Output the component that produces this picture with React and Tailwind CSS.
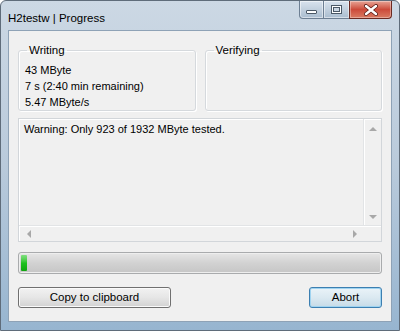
import React from "react";

const font = { fontFamily: '"Liberation Sans", Arial, sans-serif' };

function Arrow({ dir }) {
  const pts = {
    up: "0,5 4,1 8,5",
    down: "0,1 4,5 8,1",
    left: "5,0 1,4 5,8",
    right: "1,0 5,4 1,8",
  }[dir];
  const size = dir === "up" || dir === "down" ? { w: 8, h: 6 } : { w: 6, h: 8 };
  return (
    <svg width={size.w} height={size.h} viewBox={`0 0 ${size.w} ${size.h}`}>
      <polygon points={pts} fill="#a8a8a8" />
    </svg>
  );
}

function GroupBox({ title, children }) {
  return (
    <fieldset className="flex-1 h-[67px] border border-[#d5d9dd] rounded-[3px] shadow-[inset_1px_1px_0_#ffffff,1px_1px_0_#ffffff] px-[6px] m-0 min-w-0">
      <legend className="ml-[2px] px-[2px] text-[11.5px] leading-[12px] text-black">{title}</legend>
      <div className="pt-[6px] text-[11px] leading-[16px] text-black">{children}</div>
    </fieldset>
  );
}

export default function App() {
  return (
    <div
      className="w-[400px] h-[331px] flex flex-col bg-gradient-to-b from-[#ccd8e4] via-[#b9cadb] to-[#97b5d0] border border-[#5f6c7a] rounded-t-[6px] overflow-hidden"
      style={font}
    >
      {/* title bar */}
      <div className="h-[29px] flex items-start justify-between pl-[7px] pr-[7px]">
        <div className="pt-[10px] text-[11.5px] leading-[14px] text-black">H2testw | Progress</div>
        <div className="flex">
          <div className="w-[25px] h-[18px] flex items-end justify-center pb-[4px] border border-[#6d7f93] border-t-0 rounded-bl-[4px] bg-gradient-to-b from-[#d9e3ee] via-[#c2d0de] to-[#a9bccf] shadow-[inset_0_0_0_1px_rgba(255,255,255,0.5)]">
            <div className="w-[11px] h-[4px] border border-[#4a5866] bg-white rounded-[1px]" />
          </div>
          <div className="w-[25px] h-[18px] flex items-center justify-center border-b border-[#6d7f93] bg-gradient-to-b from-[#d9e3ee] via-[#c2d0de] to-[#a9bccf] shadow-[inset_0_0_0_1px_rgba(255,255,255,0.5)]">
            <div className="w-[11px] h-[9px] border border-[#4a5866] bg-white flex items-center justify-center">
              <div className="w-[7px] h-[5px] border border-[#4a5866] bg-[#c9d5e2]" />
            </div>
          </div>
          <div className="w-[43px] h-[18px] flex items-center justify-center border border-[#6b2a22] border-t-0 rounded-br-[4px] bg-gradient-to-b from-[#e6a396] via-[#cc4a3a] to-[#d97a62] shadow-[inset_0_0_0_1px_rgba(255,255,255,0.35)]">
            <svg width="14" height="12" viewBox="0 0 14 12">
              <path d="M2 2 L12 10 M12 2 L2 10" stroke="#5b1d16" strokeWidth="4" strokeLinecap="round" />
              <path d="M2 2 L12 10 M12 2 L2 10" stroke="#ffffff" strokeWidth="2.5" strokeLinecap="round" />
            </svg>
          </div>
        </div>
      </div>

      {/* client area */}
      <div className="flex-1 mx-[7px] mb-[8px] border border-[#8ea2b6] bg-[#f0f0f0] flex flex-col px-[9px] pt-[13px]">
        <div className="flex gap-[9px]">
          <GroupBox title="Writing">
            <div>43 MByte</div>
            <div>7 s (2:40 min remaining)</div>
            <div>5.47 MByte/s</div>
          </GroupBox>
          <GroupBox title="Verifying" />
        </div>

        {/* log box */}
        <div className="mt-[7px] h-[124px] border border-[#d2d6da] shadow-[inset_1px_1px_0_#ffffff] flex flex-col">
          <div className="flex-1 flex min-h-0">
            <div className="flex-1 pl-[5px] pt-[2px] text-[11px] leading-[16px] text-black">
              Warning: Only 923 of 1932 MByte tested.
            </div>
            <div className="w-[18px] border-l border-[#e2e4e6] shadow-[inset_1px_0_0_#ffffff] flex flex-col items-center justify-between pt-[7px] pb-[5px]">
              <Arrow dir="up" />
              <Arrow dir="down" />
            </div>
          </div>
          <div className="h-[16px] flex border-t border-[#e2e4e6] shadow-[inset_0_1px_0_#ffffff]">
            <div className="flex-1 flex items-center justify-between pl-[7px] pr-[5px]">
              <Arrow dir="left" />
              <Arrow dir="right" />
            </div>
            <div className="w-[18px]" />
          </div>
        </div>

        {/* progress bar */}
        <div className="mt-[10px] h-[22px] border border-[#a9abad] rounded-[3px] bg-gradient-to-b from-[#e6e6e6] via-[#d2d2d2] to-[#c6c6c6] shadow-[inset_0_0_0_1px_#eeeeee] p-[2px] flex">
          <div className="w-[6px] h-full rounded-[1px] bg-gradient-to-b from-[#7fe07f] via-[#1ec21e] to-[#0fa50f]" />
        </div>

        {/* buttons */}
        <div className="mt-[13px] flex justify-between">
          <button className="w-[153px] h-[21px] border border-[#707070] rounded-[3px] bg-gradient-to-b from-[#f2f2f2] via-[#e6e6e6] to-[#d2d2d2] shadow-[inset_0_0_0_1px_#fafafa] text-[11.5px] text-black leading-none">
            Copy to clipboard
          </button>
          <button className="w-[73px] h-[21px] border border-[#3c7fb1] rounded-[3px] bg-gradient-to-b from-[#eaf3f8] via-[#dbe9f1] to-[#c6dbe7] shadow-[inset_0_0_0_1px_#9fd3f0] text-[11.5px] text-black leading-none">
            Abort
          </button>
        </div>
      </div>
    </div>
  );
}
